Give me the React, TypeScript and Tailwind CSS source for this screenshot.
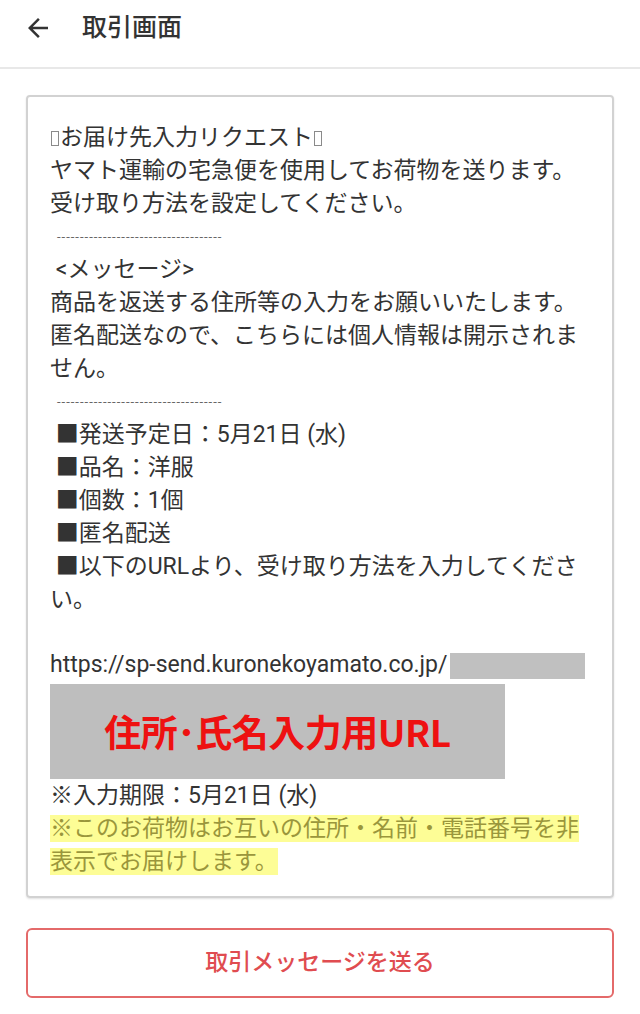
import React from 'react';

const Tofu = () => (
  <span className="inline-block w-[8px] h-[15px] border border-[#8a8a8a] align-[-1px] mx-[1px]" />
);

const Dashes = () => (
  <div className="h-[33px] flex items-center pl-[7px] text-[13px] text-[#666] tracking-[1px]">
    ------------------------------------
  </div>
);

const Line: React.FC<{ children: React.ReactNode }> = ({ children }) => (
  <p className="leading-[33px]">{children}</p>
);

export default function App() {
  return (
    <div className="w-[640px] min-h-[1014px] bg-white text-[#333] font-['Roboto','Noto_Sans_CJK_JP',sans-serif]">
      <header className="h-[69px] flex items-start pt-[13px] border-b-2 border-[#e8e8e8]">
        <svg viewBox="0 0 24 24" className="ml-[23px] w-[30px] h-[30px] fill-[#333]">
          <path d="M20 11H7.83l5.59-5.59L12 4l-8 8 8 8 1.41-1.41L7.83 13H20v-2z" />
        </svg>
        <h1 className="ml-[29px] text-[25px] leading-[30px] font-medium">取引画面</h1>
      </header>

      <main className="px-[26px] pt-[26px] pb-[17px]">
        <section className="border-2 border-[#d2d2d2] rounded-[4px] shadow-[0_1px_2px_rgba(0,0,0,0.12)] pl-[22px] pr-[20px] pt-[24px] pb-[18px] text-[23px]">
          <Line>
            <Tofu />お届け先入力リクエスト<Tofu />
          </Line>
          <Line>ヤマト運輸の宅急便を使用してお荷物を送ります。</Line>
          <Line>受け取り方法を設定してください。</Line>
          <Dashes />
          <Line>&nbsp;&lt;メッセージ&gt;</Line>
          <Line>商品を返送する住所等の入力をお願いいたします。</Line>
          <Line>匿名配送なので、こちらには個人情報は開示されません。</Line>
          <Dashes />
          <Line>&nbsp;■発送予定日：5月21日 (水)</Line>
          <Line>&nbsp;■品名：洋服</Line>
          <Line>&nbsp;■個数：1個</Line>
          <Line>&nbsp;■匿名配送</Line>
          <Line>&nbsp;■以下のURLより、受け取り方法を入力してください。</Line>
          <div className="h-[33px]" />
          <div className="h-[33px] flex items-center">
            <span>https://sp-send.kuronekoyamato.co.jp/</span>
            <span className="ml-[2px] w-[135px] h-[26px] bg-[#c0c0c0]" />
          </div>
          <div className="mt-[2px] w-[455px] h-[95px] bg-[#bebebe] flex items-center justify-center">
            <span className="text-[37px] leading-none font-bold text-[#ee1111] font-['Noto_Sans_CJK_JP',sans-serif] tracking-[-0.5px]">住所･氏名入力用URL</span>
          </div>
          <Line>※入力期限：5月21日 (水)</Line>
          <p className="leading-[33px] text-[#9a963c]">
            <span className="bg-[#fdfd96] box-decoration-clone">
              ※このお荷物はお互いの住所・名前・電話番号を非表示でお届けします。
            </span>
          </p>
        </section>

        <button className="mt-[30px] w-full h-[70px] border-2 border-[#e46a6a] rounded-[6px] text-[23px] font-medium text-[#e04c50]">
          取引メッセージを送る
        </button>
      </main>
    </div>
  );
}
